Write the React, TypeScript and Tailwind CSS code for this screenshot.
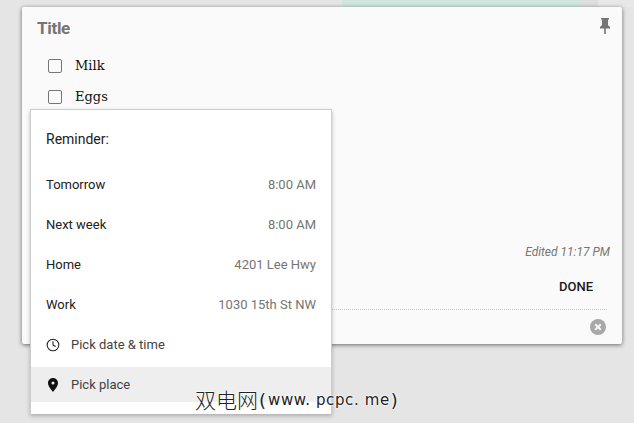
import { Clock } from "lucide-react"

const rows = [
  { label: "Tomorrow", value: "8:00 AM" },
  { label: "Next week", value: "8:00 AM" },
  { label: "Home", value: "4201 Lee Hwy" },
  { label: "Work", value: "1030 15th St NW" },
]

function PinIcon() {
  return (
    <svg width="12" height="16" viewBox="0 0 12 16" className="text-[#757575]">
      <path fill="currentColor" d="M2 0h8v1.500H9V7l2 2v1.500H6.800V16H5.200v-5.500H1V9l2-2V1.500H2z" />
    </svg>
  )
}

function PlaceIcon() {
  return (
    <svg width="10" height="14" viewBox="0 0 10 14">
      <path
        fill="#111"
        fillRule="evenodd"
        d="M5 0C2.200 0 0 2.200 0 5c0 3.600 5 9 5 9s5-5.400 5-9c0-2.800-2.200-5-5-5zm0 6.500A1.500 1.500 0 1 1 5 3.500a1.500 1.500 0 0 1 0 3z"
      />
    </svg>
  )
}

function CloseCircle() {
  return (
    <svg width="16" height="16" viewBox="0 0 16 16">
      <circle cx="8" cy="8" r="8" fill="#a8a8a8" />
      <path d="M5.200 5.200l5.600 5.600M10.800 5.200l-5.600 5.600" stroke="#f5f5f5" strokeWidth="2" />
    </svg>
  )
}

function CheckRow({ text }: { text: string }) {
  return (
    <div className="flex items-center h-[31px] pl-[26px]">
      <div className="w-[14px] h-[14px] rounded-[2px] border border-[#757575]" />
      <span className="ml-[13px] pt-[1px] text-[13px] text-[#111] font-['DejaVu_Serif',serif]">{text}</span>
    </div>
  )
}

export default function App() {
  return (
    <div className="relative w-[634px] h-[423px] overflow-hidden bg-[#e5e5e5] font-['Roboto',sans-serif]">
      {/* note behind the card */}
      <div className="flex h-[7px]">
        <div className="ml-[342px] w-[240px] bg-[#d0e6df]" />
        <div className="w-[16px] bg-[#dedede]" />
        <div className="flex-1 bg-[#e8e8e8]" />
      </div>

      {/* card */}
      <div className="relative ml-[22px] w-[600px] h-[337px] rounded-[2px] bg-[#fafafa] shadow-[0_1px_4px_rgba(0,0,0,0.55)]">
        <div className="flex items-start justify-between pt-[11px] pl-[15px] pr-[11px]">
          <span className="text-[17px] font-bold text-[#757575] leading-[20px] tracking-[-0.3px]">Title</span>
          <PinIcon />
        </div>
        <div className="mt-[12px]">
          <CheckRow text="Milk" />
          <CheckRow text="Eggs" />
        </div>

        <div className="absolute right-[12px] top-[236px] text-[12px] italic text-[#767676]">Edited 11:17 PM</div>
        <div className="absolute right-[29px] top-[270px] text-[13px] font-medium text-[#1a1a1a]">DONE</div>
        <div className="absolute left-[308px] right-[15px] top-[302px] border-t border-dotted border-[#cccccc]" />
        <div className="absolute right-[16px] top-[312px] flex">
          <CloseCircle />
        </div>
      </div>

      {/* reminder menu */}
      <div className="absolute left-[30px] top-[109px] w-[302px] h-[305px] bg-white border border-[#cdcdcd] border-b-0 shadow-[0_2px_4px_rgba(0,0,0,0.25)]">
        <div className="h-[55px] pl-[15px] pt-[20px] text-[14px] leading-[18px] text-[#212121]">Reminder:</div>
        {rows.map((r) => (
          <div key={r.label} className="flex items-center justify-between h-[40px] px-[15px] text-[13px]">
            <span className="text-[#212121]">{r.label}</span>
            <span className="text-[#757575]">{r.value}</span>
          </div>
        ))}
        <div className="flex items-center h-[40px] pl-[15px] text-[13px] text-[#424242]">
          <Clock size={14} strokeWidth={1.8} className="text-[#212121]" />
          <span className="ml-[11px]">Pick date &amp; time</span>
        </div>
        <div className="flex items-center h-[35px] mt-[2px] pl-[17px] text-[13px] text-[#424242] bg-[#eeeeee]">
          <PlaceIcon />
          <span className="ml-[13px]">Pick place</span>
        </div>
      </div>

      {/* watermark */}
      <div className="absolute left-[195px] top-[387px] flex items-center h-[26px] whitespace-pre text-[#222] [text-shadow:0_0_2px_#fff,0_0_2px_#fff,0_0_2px_#fff]">
        <span className="text-[21px] font-['Noto_Sans_CJK_SC',sans-serif] font-light">双电网</span>
        <span className="ml-[1px] text-[18px] font-['DejaVu_Sans',sans-serif]">(</span>
        <span className="ml-[2px] text-[15px] tracking-[0.6px] font-['DejaVu_Sans',sans-serif]">www. pcpc. me</span>
        <span className="ml-[1px] text-[18px] font-['DejaVu_Sans',sans-serif]">)</span>
      </div>
    </div>
  )
}
